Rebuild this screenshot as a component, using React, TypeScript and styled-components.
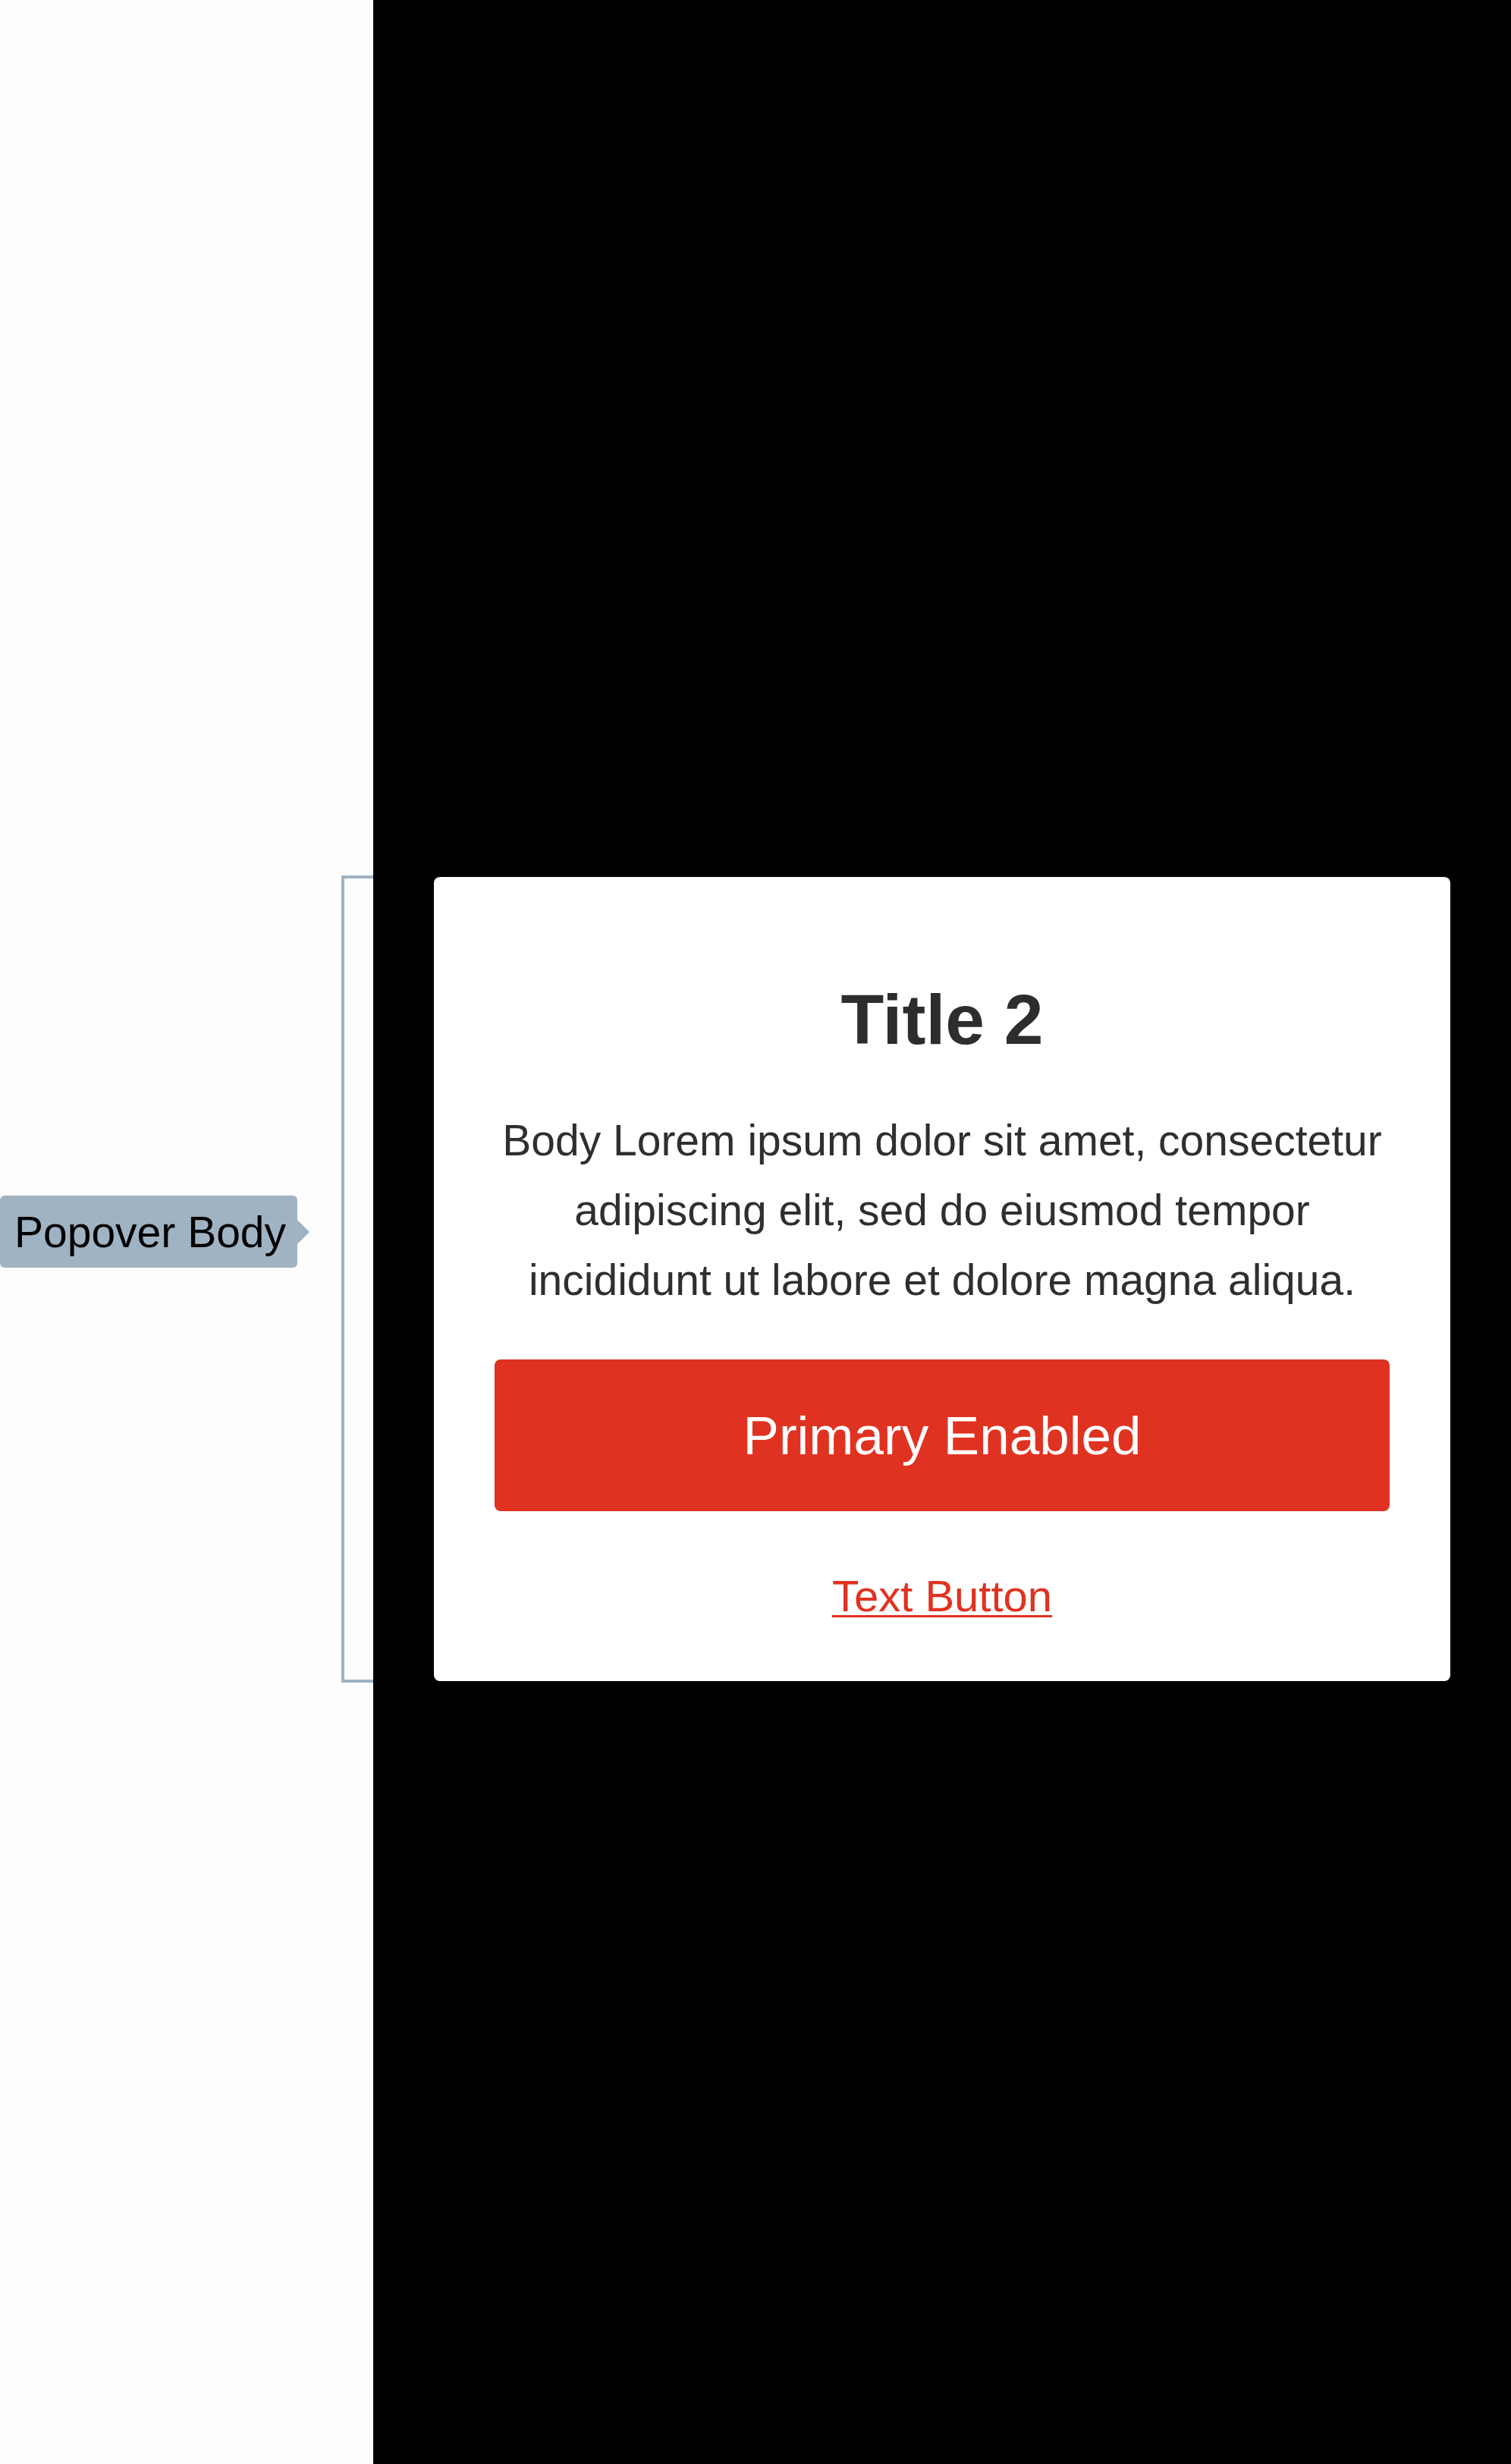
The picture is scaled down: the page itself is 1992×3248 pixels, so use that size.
import React from "react";
import styled, { createGlobalStyle } from "styled-components";

const GlobalStyle = createGlobalStyle`
  html, body {
    margin: 0;
    padding: 0;
    background: #000;
  }
  body {
    font-family: "Liberation Sans", Arial, Helvetica, sans-serif;
  }
  * { box-sizing: border-box; }
`;

const Page = styled.div`
  display: flex;
  width: 1992px;
  height: 3248px;
  overflow: hidden;
`;

const SidePanel = styled.aside`
  width: 492px;
  flex: none;
  background: #fdfdfd;
  display: flex;
  align-items: flex-start;
  padding-top: 1154px;
`;

const Label = styled.div`
  position: relative;
  margin-top: 422px;
  width: 392px;
  height: 95px;
  flex: none;
  background: #a0b3c3;
  border-radius: 6px;
  display: flex;
  align-items: center;
  padding-left: 19px;
  font-family: "Liberation Sans", Arial, sans-serif;
  font-size: 57px;
  color: #000;
  white-space: nowrap;

  &::after {
    content: "";
    position: absolute;
    right: -16px;
    top: 32px;
    border-top: 16px solid transparent;
    border-bottom: 16px solid transparent;
    border-left: 16px solid #a0b3c3;
  }
`;

const Bracket = styled.div`
  margin-left: 58px;
  width: 42px;
  height: 1064px;
  flex: none;
  border: 4px solid #a0b3c3;
  border-right: none;
`;

const Stage = styled.main`
  flex: 1;
  background: #000;
  padding: 1156px 80px 0;
`;

const Card = styled.section`
  background: #fff;
  border-radius: 8px;
  height: 1060px;
  padding: 132px 80px 0;
  display: flex;
  flex-direction: column;
  align-items: center;
  text-align: center;
`;

const Title = styled.h2`
  margin: 0;
  font-family: "Liberation Sans", Arial, sans-serif;
  font-weight: 700;
  font-size: 93px;
  line-height: 112px;
  color: #2d2d2d;
`;

const Body = styled.p`
  margin: 57px 0 0;
  font-family: "Liberation Sans", Arial, sans-serif;
  font-size: 57px;
  line-height: 92px;
  color: #2f2f2f;
`;

const PrimaryButton = styled.button`
  margin-top: 59px;
  width: 100%;
  height: 200px;
  border: none;
  border-radius: 8px;
  background: #e03220;
  color: #fff;
  font-family: "Liberation Sans", Arial, sans-serif;
  font-size: 71px;
  cursor: pointer;
`;

const TextButton = styled.a`
  margin-top: 78px;
  font-family: "Liberation Sans", Arial, sans-serif;
  font-size: 58px;
  line-height: 67px;
  color: #e03220;
  text-decoration: underline;
  text-decoration-thickness: 3px;
  text-underline-offset: 5px;
  cursor: pointer;
`;

export default function App() {
  return (
    <>
      <GlobalStyle />
      <Page>
        <SidePanel>
          <Label>Popover Body</Label>
          <Bracket />
        </SidePanel>
        <Stage>
          <Card>
            <Title>Title 2</Title>
            <Body>
              Body Lorem ipsum dolor sit amet, consectetur adipiscing elit, sed do eiusmod tempor incididunt ut labore et dolore magna aliqua.
            </Body>
            <PrimaryButton>Primary Enabled</PrimaryButton>
            <TextButton>Text Button</TextButton>
          </Card>
        </Stage>
      </Page>
    </>
  );
}
